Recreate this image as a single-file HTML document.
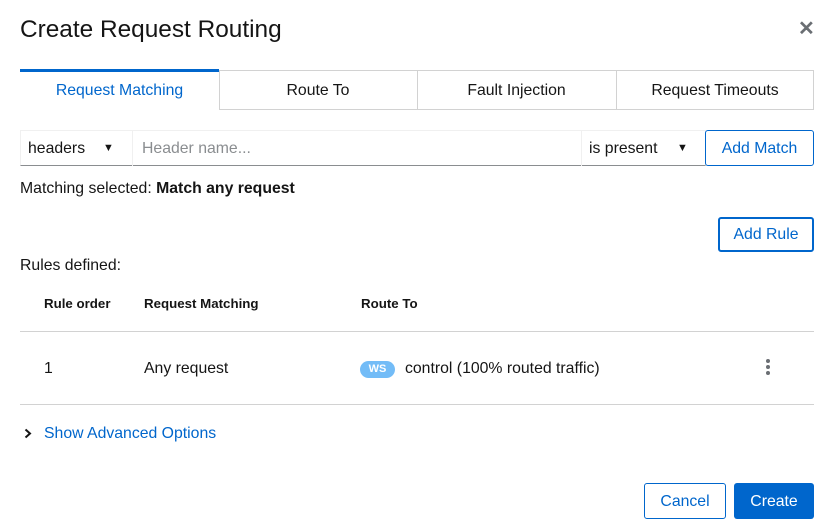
<!DOCTYPE html>
<html><head><style>
*{box-sizing:border-box;margin:0;padding:0}
body{width:835px;height:530px;background:#fff;font-family:"Liberation Sans",sans-serif;color:#151515;position:relative;overflow:hidden;font-size:15.8px}
.a{position:absolute}
.btn{position:absolute;border-radius:3px;font-size:15.8px;display:flex;align-items:center;justify-content:center}
</style></head><body>
<div class="a" style="left:20px;top:16px;font-size:24.4px">Create Request Routing</div>
<div class="a" style="left:798px;top:16px;font-size:20px;color:#6a6e73;font-weight:bold">✕</div>

<div class="a" style="left:20px;top:70px;width:794px;height:1px;background:#d2d2d2"></div>
<div class="a" style="left:20px;top:69px;width:199px;height:3px;background:#06c"></div>
<div class="a" style="left:219px;top:70px;width:595px;height:40px;border:1px solid #d2d2d2;border-top:none"></div>
<div class="a" style="left:417px;top:70px;width:1px;height:40px;background:#d2d2d2"></div>
<div class="a" style="left:616px;top:70px;width:1px;height:40px;background:#d2d2d2"></div>
<div class="a" style="left:20px;top:82px;width:199px;text-align:center;color:#06c">Request Matching</div>
<div class="a" style="left:219px;top:82px;width:198px;text-align:center">Route To</div>
<div class="a" style="left:417px;top:82px;width:199px;text-align:center">Fault Injection</div>
<div class="a" style="left:616px;top:82px;width:198px;text-align:center">Request Timeouts</div>

<div class="a" style="left:20px;top:130px;width:686px;height:36px;border:1px solid #f0f0f0;border-bottom:1px solid #8a8d90"></div>
<div class="a" style="left:132px;top:130px;width:1px;height:36px;background:#f0f0f0"></div>
<div class="a" style="left:581px;top:130px;width:1px;height:36px;background:#f0f0f0"></div>
<div class="a" style="left:28px;top:140px">headers</div>
<div class="a" style="left:103px;top:142px;font-size:11px">▼</div>
<div class="a" style="left:142px;top:140px;color:#8a8d90">Header name...</div>
<div class="a" style="left:589px;top:140px">is present</div>
<div class="a" style="left:677px;top:142px;font-size:11px">▼</div>
<div class="btn" style="left:705px;top:130px;width:109px;height:36px;border:1px solid #06c;color:#06c;padding-top:1px">Add Match</div>

<div class="a" style="left:20px;top:180px">Matching selected: <b>Match any request</b></div>
<div class="btn" style="left:718px;top:217px;width:96px;height:35px;border:2px solid #06c;color:#06c;padding-top:1px">Add Rule</div>
<div class="a" style="left:20px;top:257px">Rules defined:</div>

<div class="a" style="left:44px;top:296px;font-size:13.3px;font-weight:bold">Rule order</div>
<div class="a" style="left:144px;top:296px;font-size:13.3px;font-weight:bold">Request Matching</div>
<div class="a" style="left:361px;top:296px;font-size:13.3px;font-weight:bold">Route To</div>
<div class="a" style="left:20px;top:331px;width:794px;height:1px;background:#d2d2d2"></div>
<div class="a" style="left:44px;top:360px">1</div>
<div class="a" style="left:144px;top:360px">Any request</div>
<div class="a" style="left:360px;top:361px;width:35px;height:17px;border-radius:9px;background:#73bcf7;color:#fff;font-size:11px;font-weight:bold;text-align:center;line-height:17px">WS</div>
<div class="a" style="left:405px;top:360px">control (100% routed traffic)</div>
<div class="a" style="left:766px;top:359px;width:4px;height:4px;border-radius:2px;background:#6a6e73"></div>
<div class="a" style="left:766px;top:365px;width:4px;height:4px;border-radius:2px;background:#6a6e73"></div>
<div class="a" style="left:766px;top:371px;width:4px;height:4px;border-radius:2px;background:#6a6e73"></div>
<div class="a" style="left:20px;top:404px;width:794px;height:1px;background:#d2d2d2"></div>

<svg class="a" style="left:24px;top:428px" width="8" height="11" viewBox="0 0 8 11"><path d="M1.5 1.5 L6 5.5 L1.5 9.5" stroke="#151515" stroke-width="2" fill="none"/></svg>
<div class="a" style="left:44px;top:425px;color:#06c">Show Advanced Options</div>

<div class="btn" style="left:644px;top:483px;width:82px;height:36px;border:1px solid #06c;color:#06c;padding-top:1px">Cancel</div>
<div class="btn" style="left:734px;top:483px;width:80px;height:36px;background:#06c;color:#fff;padding-top:1px">Create</div>
</body></html>
